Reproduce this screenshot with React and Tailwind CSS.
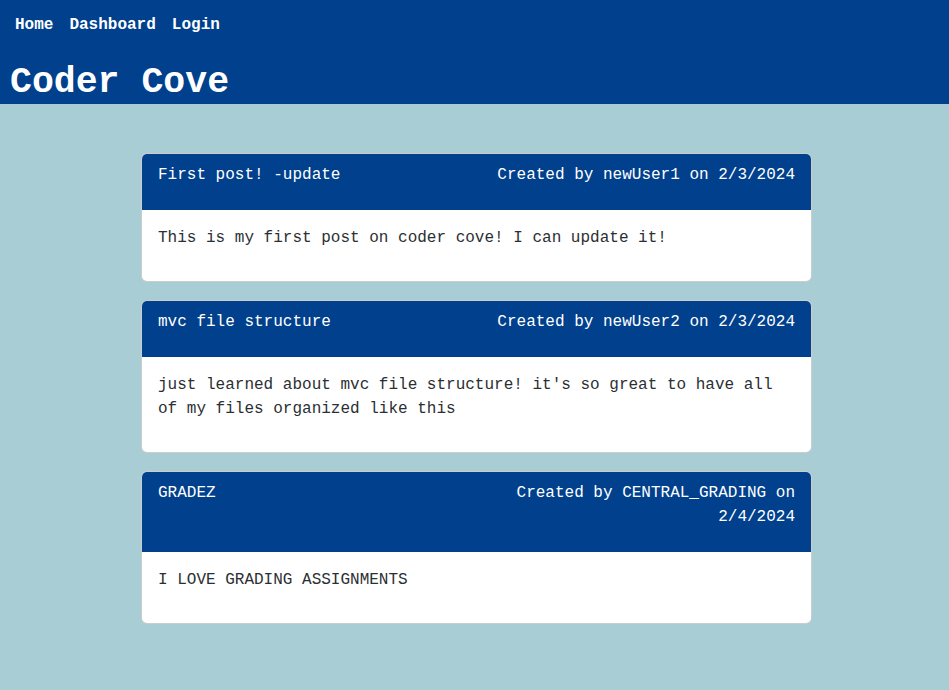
const POSTS = [
  { title: 'First post! -update', author: 'newUser1', date: '2/3/2024', body: 'This is my first post on coder cove! I can update it!' },
  { title: 'mvc file structure', author: 'newUser2', date: '2/3/2024', body: "just learned about mvc file structure! it's so great to have all of my files organized like this" },
  { title: 'GRADEZ', author: 'CENTRAL_GRADING', date: '2/4/2024', body: 'I LOVE GRADING ASSIGNMENTS' },
]

function PostCard({ post }) {
  return (
    <div className="bg-white rounded-md border border-black/20 overflow-hidden">
      {/* header */}
      <div className="bg-[#00408c] text-white px-4 pt-[9px] pb-[23px] flex">
        <p className="w-1/2">{post.title}</p>
        <p className="w-1/2 text-right">Created by {post.author} on {post.date}</p>
      </div>
      <div className="px-4 pt-4 pb-[31px] text-[#2b2f33]">
        <p>{post.body}</p>
      </div>
    </div>
  )
}

export default function App() {
  return (
    <div className="min-h-[690px] bg-[#a9cdd4] font-['Liberation_Mono','Courier_New',monospace] text-base leading-6">
      <header className="bg-[#00408c] text-white h-[104px] flex flex-col">
        <nav className="flex gap-4 px-[15px] pt-[13px] font-bold">
          <a href="#">Home</a>
          <a href="#">Dashboard</a>
          <a href="#">Login</a>
        </nav>
        <h1 className="px-[10px] mt-[24px] text-[36.5px] leading-[44px] font-bold">Coder Cove</h1>
      </header>

      <main className="w-[671px] ml-[141px] pt-[49px] flex flex-col gap-[18px]">
        {POSTS.map(p => <PostCard key={p.title} post={p} />)}
      </main>
    </div>
  )
}
